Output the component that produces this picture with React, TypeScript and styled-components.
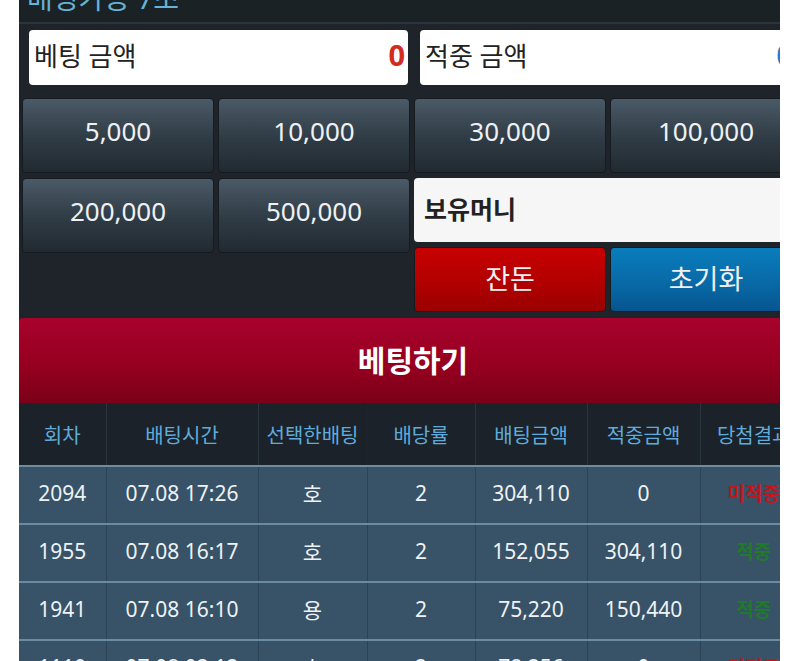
import React from "react";
import styled, { createGlobalStyle, css } from "styled-components";

const GlobalStyle = createGlobalStyle`
  html, body {
    margin: 0;
    padding: 0;
    background: #fff;
  }
  body {
    font-family: "Noto Sans", "Noto Sans CJK KR", sans-serif;
  }
`;

const chips = ["5,000", "10,000", "30,000", "100,000"];
const chips2 = ["200,000", "500,000"];

type Row = {
  round: string;
  time: string;
  pick: string;
  odds: string;
  bet: string;
  win: string;
  result: "win" | "lose";
};

const rows: Row[] = [
  { round: "2094", time: "07.08 17:26", pick: "호", odds: "2", bet: "304,110", win: "0", result: "lose" },
  { round: "1955", time: "07.08 16:17", pick: "호", odds: "2", bet: "152,055", win: "304,110", result: "win" },
  { round: "1941", time: "07.08 16:10", pick: "용", odds: "2", bet: "75,220", win: "150,440", result: "win" },
  { round: "1119", time: "07.08 02:12", pick: "호", odds: "2", bet: "78,256", win: "0", result: "lose" },
];

const widths = [87, 152, 109, 108, 112, 113, 107];
const heads = ["회차", "배팅시간", "선택한배팅", "배당률", "배팅금액", "적중금액", "당첨결과"];

export default function App() {
  return (
    <>
      <GlobalStyle />
      <Viewport>
        <Panel>
          <Title>
            <span>배팅가능 7초</span>
          </Title>

          <AmountRow>
            <AmountBox>
              <span>베팅 금액</span>
              <Amount $tone="red">0</Amount>
            </AmountBox>
            <AmountBox>
              <span>적중 금액</span>
              <Amount $tone="blue">0</Amount>
            </AmountBox>
          </AmountRow>

          <ChipGrid>
            {chips.map((c) => (
              <Chip key={c}>{c}</Chip>
            ))}
            {chips2.map((c) => (
              <Chip key={c}>{c}</Chip>
            ))}
            <Side>
              <MoneyBox>
                <b>보유머니</b>
                <span>0</span>
              </MoneyBox>
              <SideButtons>
                <ActionButton $variant="red">잔돈</ActionButton>
                <ActionButton $variant="blue">초기화</ActionButton>
              </SideButtons>
            </Side>
          </ChipGrid>

          <BetButton>베팅하기</BetButton>

          <Table>
            <colgroup>
              {widths.map((w, i) => (
                <col key={i} style={{ width: w }} />
              ))}
            </colgroup>
            <thead>
              <tr>
                {heads.map((h) => (
                  <th key={h}>{h}</th>
                ))}
              </tr>
            </thead>
            <tbody>
              {rows.map((r) => (
                <tr key={r.round}>
                  <td>{r.round}</td>
                  <td>{r.time}</td>
                  <td>{r.pick}</td>
                  <td>{r.odds}</td>
                  <td>{r.bet}</td>
                  <td>{r.win}</td>
                  <td>
                    <Result $win={r.result === "win"}>
                      {r.result === "win" ? "적중" : "미적중"}
                    </Result>
                  </td>
                </tr>
              ))}
            </tbody>
          </Table>
        </Panel>
      </Viewport>
    </>
  );
}

const Viewport = styled.div`
  margin-left: 19px;
  width: 761px;
  height: 661px;
  overflow: hidden;
  background: #1e2429;
`;

const Panel = styled.div`
  width: 788px;
`;

const Title = styled.div`
  height: 22px;
  overflow: hidden;
  border-bottom: 2px solid #2c353c;
  background: #1b2226;

  span {
    display: block;
    margin-top: -19px;
    padding-left: 8px;
    font-size: 28px;
    line-height: 34px;
    color: #63b4d6;
  }
`;

const AmountRow = styled.div`
  display: grid;
  grid-template-columns: 379px 376px;
  gap: 12px;
  padding: 6px 8px 0 10px;
`;

const AmountBox = styled.div`
  height: 55px;
  box-sizing: border-box;
  display: flex;
  align-items: center;
  justify-content: space-between;
  padding: 0 3px 6px 5px;
  background: #fff;
  border-radius: 4px;
  font-size: 26px;
  color: #222;
`;

const Amount = styled.span<{ $tone: "red" | "blue" }>`
  font-weight: 700;
  font-size: 29px;
  color: ${(p) => (p.$tone === "red" ? "#d42a22" : "#1d7ed0")};
`;

const ChipGrid = styled.div`
  display: grid;
  grid-template-columns: repeat(4, 192px);
  column-gap: 4px;
  row-gap: 5px;
  padding: 13px 0 0 3px;
  align-items: start;
`;

const buttonBase = css`
  box-sizing: border-box;
  display: flex;
  align-items: center;
  justify-content: center;
  border-radius: 4px;
  color: #eef1f3;
  cursor: pointer;
`;

const Chip = styled.div`
  ${buttonBase};
  height: 75px;
  padding-bottom: 9px;
  font-size: 26px;
  border: 1px solid #161b1f;
  background: linear-gradient(#4a5a67, #2f3b44 55%, #222a31);
`;

const Side = styled.div`
  grid-column: 3 / span 2;
  display: flex;
  flex-direction: column;
  gap: 5px;
`;

const MoneyBox = styled.div`
  height: 64px;
  box-sizing: border-box;
  display: flex;
  align-items: center;
  justify-content: space-between;
  padding: 0 8px 4px 10px;
  background: #f6f6f6;
  border-radius: 4px;
  color: #222;

  b {
    font-size: 25px;
    font-weight: 700;
  }

  span {
    font-size: 25px;
    color: #333;
  }
`;

const SideButtons = styled.div`
  display: grid;
  grid-template-columns: 192px 192px;
  gap: 4px;
`;

const ActionButton = styled.div<{ $variant: "red" | "blue" }>`
  ${buttonBase};
  height: 65px;
  padding-bottom: 4px;
  font-size: 27px;
  border: 1px solid #161b1f;
  background: ${(p) =>
    p.$variant === "red"
      ? "linear-gradient(#c80000, #b00000 60%, #9a0000)"
      : "linear-gradient(#0a7dbd, #0868a4 60%, #075590)"};
`;

const BetButton = styled.div`
  ${buttonBase};
  margin-top: 6px;
  height: 85px;
  padding-bottom: 4px;
  border-radius: 4px 4px 0 0;
  font-size: 30px;
  font-weight: 700;
  color: #fff;
  background: linear-gradient(#a8022c, #94001f 60%, #7a0018);
`;

const Table = styled.table`
  width: 788px;
  table-layout: fixed;
  border-collapse: collapse;
  text-align: center;

  th {
    height: 62px;
    padding: 0;
    font-size: 20px;
    font-weight: 400;
    color: #5fabdc;
    background: #1b2229;
    border-left: 1px solid #2a3640;
    border-bottom: 2px solid #6d8da3;
    white-space: nowrap;
    overflow: hidden;
  }

  th:nth-child(4) {
    border-left-color: transparent;
  }

  td {
    height: 51px;
    padding: 0 0 5px;
    font-size: 21px;
    color: #eef2f5;
    background: #385267;
    border-left: 1px solid #2b4356;
    border-bottom: 2px solid #6a8ba2;
    white-space: nowrap;
    overflow: hidden;
  }

  th:first-child,
  td:first-child {
    border-left: none;
  }
`;

const Result = styled.span<{ $win: boolean }>`
  font-size: 19px;
  font-weight: 700;
  color: ${(p) => (p.$win ? "#1f7a2c" : "#c4141c")};
`;
